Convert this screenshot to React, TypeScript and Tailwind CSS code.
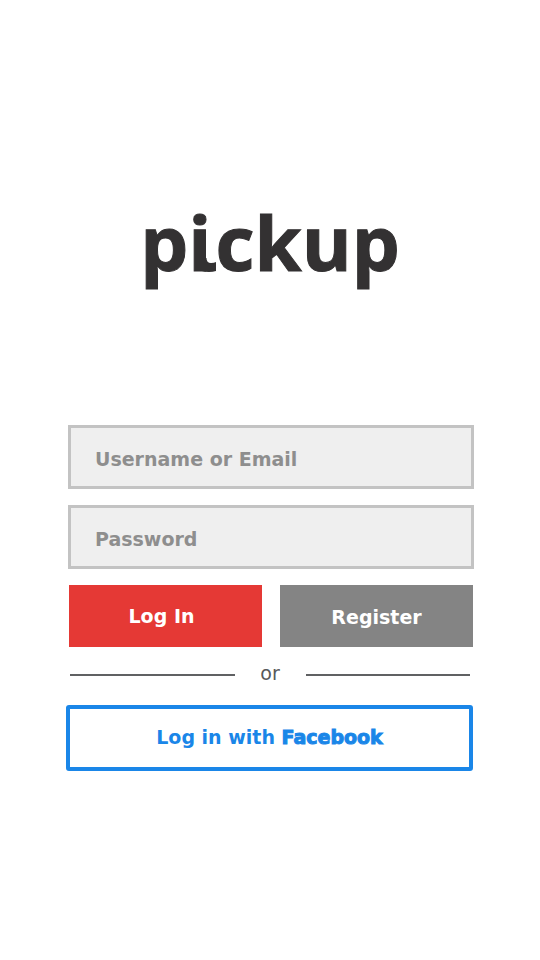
const fontStack = "font-['DejaVu_Sans',Verdana,sans-serif]";

const fieldStyle =
  "block h-16 w-full border-3 border-[#c3c3c3] bg-[#efefef] px-6 pt-1 text-[19px] font-bold text-[#8e8e8e] outline-none placeholder:text-[#8e8e8e] placeholder:opacity-100";

function Field({ id, label, type }: { id: string; label: string; type: string }) {
  return <input id={id} name={id} type={type} aria-label={label} placeholder={label} className={fieldStyle} />;
}

function Wordmark() {
  return (
    <h1 className="font-['Open_Sans','Noto_Sans',sans-serif] text-[76px] leading-[108px] font-bold text-[#333132] [-webkit-text-stroke:1px_#333132]">
      p
      <span className="relative inline-block pr-1">
        i
        {/* foot of the i, curling to the right */}
        <svg
          className="absolute right-0 bottom-6 h-[14px] w-[14px] fill-current stroke-none"
          viewBox="0 0 14 14"
          aria-hidden="true"
        >
          <path d="M0 0H4.5Q4.5 5 9 5Q12 5 14 4V13Q11 14 7 14Q2 14 0 13Z" />
        </svg>
      </span>
      ckup
    </h1>
  );
}

export default function App() {
  return (
    <main className={`flex min-h-screen flex-col items-center bg-white px-16 pt-[188px] pb-16 ${fontStack}`}>
      <Wordmark />

      <form className="mt-[129px] w-full max-w-[408px]" onSubmit={(e) => e.preventDefault()}>
        <div className="flex flex-col gap-4 pl-0.5">
          <Field id="username" label="Username or Email" type="text" />
          <Field id="password" label="Password" type="password" />
          <div className="grid grid-cols-2 gap-[18px] px-px text-[19px] font-bold text-white">
            <button type="submit" className="h-[62px] bg-[#e53935] pr-2">
              Log In
            </button>
            <button type="button" className="h-[62px] bg-[#848484] pt-0.5">
              Register
            </button>
          </div>
        </div>

        <div className="mt-3 flex items-center px-1 text-[19px] leading-7 text-[#58595b]">
          <span className="h-0.5 flex-1 bg-[#606163]" />
          <span className="w-[71px] pb-1 text-center">or</span>
          <span className="h-0.5 flex-1 bg-[#606163]" />
        </div>

        <div className="mt-[14px] pr-px">
          <button
            type="button"
            className="h-[66px] w-full rounded-[3px] border-4 border-[#1a86e8] bg-white pb-0.5 text-[19px] font-bold text-[#1a86e8]"
          >
            Log in with <span className="[-webkit-text-stroke:1px_#1a86e8]">Facebook</span>
          </button>
        </div>
      </form>
    </main>
  );
}
